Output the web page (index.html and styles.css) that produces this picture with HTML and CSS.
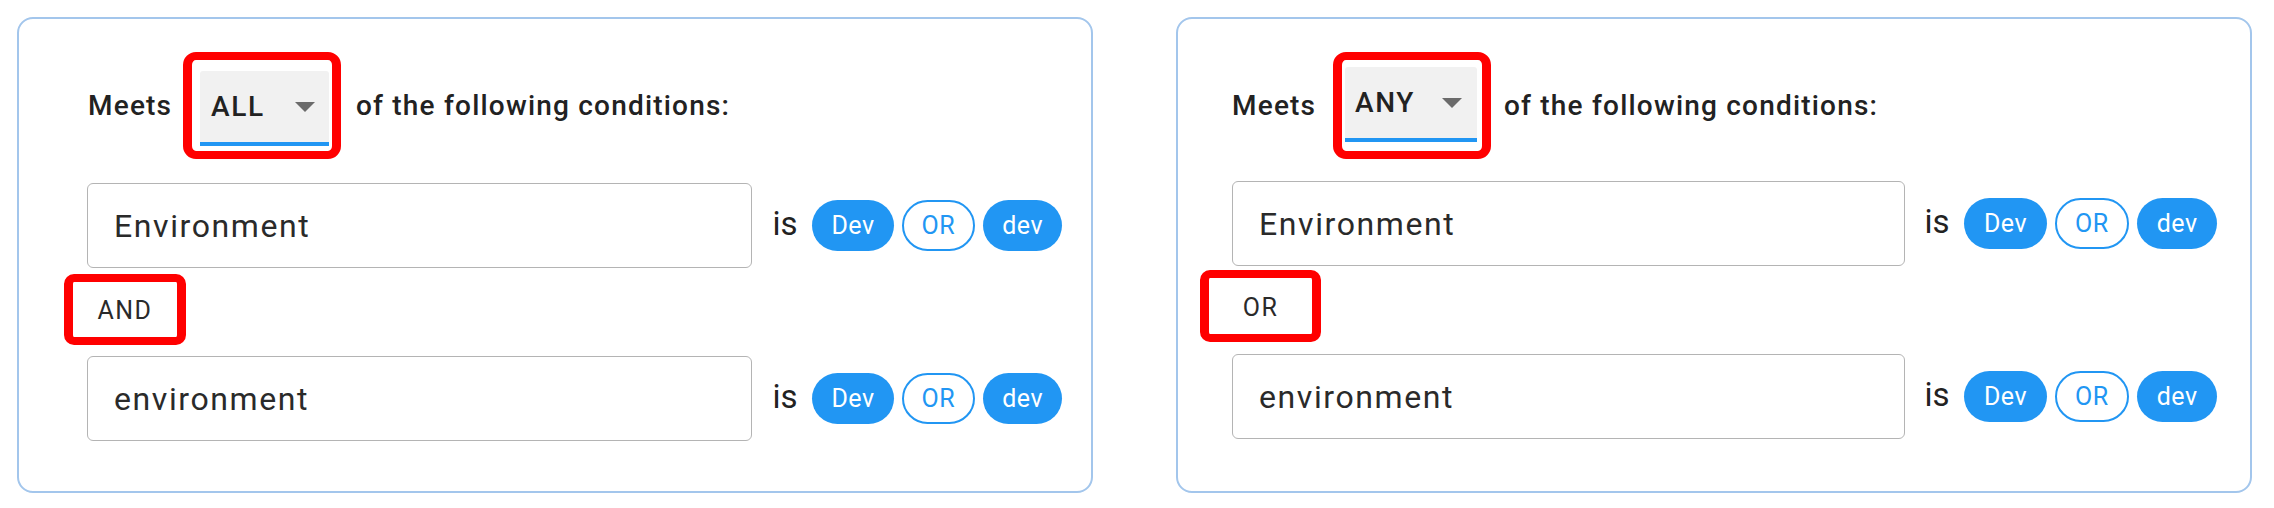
FILE: index.html
```html
<!DOCTYPE html>
<html lang="en">
<head>
<meta charset="utf-8">
<title>Conditions</title>
<link rel="stylesheet" href="styles.css">
</head>
<body>
<div class="page">
  <section class="card card--left">
    <div class="header">
      <span class="label label--meets">Meets</span>
      <div class="mark mark--select">
        <div class="select">
          <span class="select-value">ALL</span>
          <span class="caret"></span>
        </div>
      </div>
      <span class="label label--after">of the following conditions:</span>
    </div>
    <div class="cond">
      <div class="field">Environment</div>
      <span class="is">is</span>
      <div class="chips">
        <span class="chip">Dev</span>
        <span class="chip chip--outline">OR</span>
        <span class="chip">dev</span>
      </div>
    </div>
    <div class="mark mark--op mark--op-left"><span class="op">AND</span></div>
    <div class="cond">
      <div class="field">environment</div>
      <span class="is">is</span>
      <div class="chips">
        <span class="chip">Dev</span>
        <span class="chip chip--outline">OR</span>
        <span class="chip">dev</span>
      </div>
    </div>
  </section>

  <section class="card card--right">
    <div class="header">
      <span class="label label--meets">Meets</span>
      <div class="mark mark--select">
        <div class="select">
          <span class="select-value">ANY</span>
          <span class="caret"></span>
        </div>
      </div>
      <span class="label label--after">of the following conditions:</span>
    </div>
    <div class="cond cond--first">
      <div class="field">Environment</div>
      <span class="is">is</span>
      <div class="chips">
        <span class="chip">Dev</span>
        <span class="chip chip--outline">OR</span>
        <span class="chip">dev</span>
      </div>
    </div>
    <div class="mark mark--op mark--op-right"><span class="op">OR</span></div>
    <div class="cond">
      <div class="field">environment</div>
      <span class="is">is</span>
      <div class="chips">
        <span class="chip">Dev</span>
        <span class="chip chip--outline">OR</span>
        <span class="chip">dev</span>
      </div>
    </div>
  </section>
</div>
</body>
</html>
```

FILE: styles.css
```css
* {
  box-sizing: border-box;
}

html, body {
  margin: 0;
  background: #ffffff;
}

body {
  font-family: Roboto, "Noto Sans", "Liberation Sans", sans-serif;
  color: #222222;
}

.page {
  display: flex;
  gap: 83px;
  padding: 17px 22px 15px 17px;
}

.card {
  flex: 0 0 1076px;
  height: 476px;
  border: 2px solid #a3c6ec;
  border-radius: 16px;
  padding: 33px 29px 0 68px;
}

.card--right {
  padding: 33px 33px 0 54px;
}

.header {
  display: flex;
  align-items: center;
  height: 107px;
}

.label {
  font-size: 28px;
  font-weight: 500;
  letter-spacing: 1.2px;
  color: #222222;
  white-space: nowrap;
}

.label--meets {
  width: 95px;
  margin-left: 1px;
}

.card--right .label--meets {
  width: 101px;
  margin-left: 0;
}

.label--after {
  margin-left: 15px;
}

.card--right .label--after {
  margin-left: 13px;
}

.mark {
  border: 8px solid #ff0000;
  border-radius: 13px;
  background: #ffffff;
}

.mark--select {
  width: 158px;
  height: 107px;
  border-width: 8px 9px;
  padding: 11px 3px 3px 8px;
}

.card--right .mark--select {
  padding: 11px 5px 3px 3px;
}

.select {
  height: 75px;
  background: #f1f1f1;
  border-bottom: 4px solid #2196f3;
  border-radius: 3px 3px 0 0;
  display: flex;
  align-items: center;
  justify-content: space-between;
  padding: 0 14px 0 11px;
}

.card--right .select {
  margin-top: -4px;
  padding: 0 15px 0 10px;
}

.select-value {
  font-size: 28px;
  font-weight: 500;
  letter-spacing: 1.6px;
  color: #222222;
}

.caret {
  width: 0;
  height: 0;
  border-left: 10px solid transparent;
  border-right: 10px solid transparent;
  border-top: 10px solid #6b6b6b;
}

.cond {
  display: flex;
  align-items: center;
  margin-top: 24px;
}

.cond--first {
  margin-top: 22px;
}

.mark--op + .cond {
  margin-top: 0;
}

.field {
  flex: 1;
  height: 85px;
  border: 1.5px solid #b4b4b4;
  border-radius: 6px;
  padding-left: 26px;
  display: flex;
  align-items: center;
  font-size: 32px;
  letter-spacing: 1.6px;
  color: #2a2a2a;
}

.is {
  font-size: 33px;
  color: #222222;
  margin: -4px 15px 0 20px;
}

.card--right .is {
  margin-left: 19px;
}

.chips {
  display: flex;
  gap: 8px;
}

.chip {
  height: 51px;
  border-radius: 26px;
  background: #2196f3;
  color: #ffffff;
  font-size: 25px;
  letter-spacing: 0.5px;
  padding: 0 19px;
  display: flex;
  align-items: center;
  justify-content: center;
}

.chip--outline {
  background: #ffffff;
  color: #2196f3;
  border: 2px solid #2196f3;
  padding: 0 18px;
}

.card--right .chip {
  padding: 0 19.5px;
}

.card--right .chip--outline {
  padding: 0 18.5px;
}

.mark--op {
  width: 122px;
  height: 71px;
  border-width: 8px 9px;
  border-radius: 10px;
  display: flex;
  align-items: center;
  justify-content: center;
  margin: 6px 0 11px -23px;
}

.mark--op-right {
  width: 121px;
  height: 72px;
  margin: 4px 0 12px -32px;
}

.op {
  font-size: 25px;
  letter-spacing: 1.5px;
  color: #2a2a2a;
  margin-top: 2px;
}
```
